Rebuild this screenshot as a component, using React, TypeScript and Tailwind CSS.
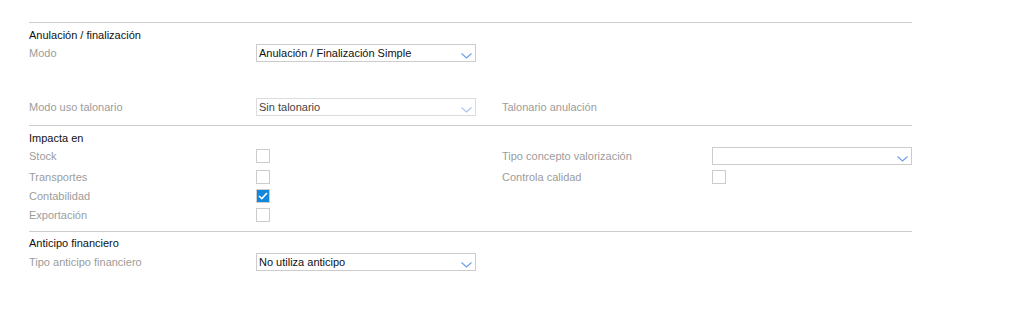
import React from "react";

const Chevron = ({ light = false }: { light?: boolean }) => (
  <svg width="11" height="6" viewBox="0 0 11 6" className="absolute right-[3px] top-[8px]" fill="none">
    <path d="M0.5 0.5 L5.5 5 L10.5 0.5" stroke={light ? "#a9c4f2" : "#6b9cf0"} strokeWidth="1.1" />
  </svg>
);

function Select({ value, width = "w-[220px]", dim = false }: { value: string; width?: string; dim?: boolean }) {
  return (
    <div className={`relative h-[18px] ${width} border ${dim ? "border-[#dcdcdc]" : "border-[#cccccc]"} bg-white flex items-center pl-[2px]`}>
      <span className={`text-[11px] leading-[16px] ${dim ? "text-[#444]" : "text-[#111]"}`}>{value}</span>
      <Chevron light={dim} />
    </div>
  );
}

function Check({ checked = false }: { checked?: boolean }) {
  return checked ? (
    <div className="w-[14px] h-[14px] bg-[#1287dc] border border-[#cfcfcf] flex items-center justify-center">
      <svg width="10" height="8" viewBox="0 0 10 8" fill="none">
        <path d="M1 4 L3.8 6.6 L9 1" stroke="white" strokeWidth="1.6" />
      </svg>
    </div>
  ) : (
    <div className="w-[14px] h-[14px] border border-[#cccccc] bg-white" />
  );
}

const Label = ({ children, w = "w-[227px]" }: { children: React.ReactNode; w?: string }) => (
  <div className={`${w} shrink-0 text-[11px] text-[#9c9c9c]`}>{children}</div>
);

const Heading = ({ children }: { children: React.ReactNode }) => (
  <div className="h-[13px] leading-[13px] text-[11px] text-[#111]">{children}</div>
);

const Line = () => <div className="h-px bg-[#cccccc]" />;

export default function App() {
  return (
    <div className="w-[1013px] h-[309px] bg-white" style={{ fontFamily: '"Liberation Sans", Arial, sans-serif' }}>
      <div className="pl-[29px] pt-[22px] w-[912px]">
        <Line />
        <div className="mt-[6px]">
          <Heading>Anulación / finalización</Heading>
        </div>
        <div className="mt-[2px] flex items-center h-[18px]">
          <Label>Modo</Label>
          <Select value="Anulación / Finalización Simple" />
        </div>
        <div className="mt-[36px] flex items-center h-[18px]">
          <Label>Modo uso talonario</Label>
          <Select value="Sin talonario" dim />
          <div className="ml-[26px]">
            <Label w="w-[210px]">Talonario anulación</Label>
          </div>
        </div>
        <div className="mt-[9px]">
          <Line />
        </div>
        <div className="mt-[6px]">
          <Heading>Impacta en</Heading>
        </div>
        <div className="mt-[2px] flex items-center h-[18px]">
          <Label>Stock</Label>
          <div className="w-[220px]">
            <Check />
          </div>
          <div className="ml-[26px] flex items-center">
            <Label w="w-[210px]">Tipo concepto valorización</Label>
            <Select value="" width="w-[200px]" />
          </div>
        </div>
        <div className="mt-[3px] flex items-center h-[18px]">
          <Label>Transportes</Label>
          <div className="w-[220px]">
            <Check />
          </div>
          <div className="ml-[26px] flex items-center">
            <Label w="w-[210px]">Controla calidad</Label>
            <Check />
          </div>
        </div>
        <div className="mt-[1px] flex items-center h-[18px]">
          <Label>Contabilidad</Label>
          <Check checked />
        </div>
        <div className="mt-[1px] flex items-center h-[18px]">
          <Label>Exportación</Label>
          <Check />
        </div>
        <div className="mt-[7px]">
          <Line />
        </div>
        <div className="mt-[5px]">
          <Heading>Anticipo financiero</Heading>
        </div>
        <div className="mt-[3px] flex items-center h-[18px]">
          <Label>Tipo anticipo financiero</Label>
          <Select value="No utiliza anticipo" />
        </div>
      </div>
    </div>
  );
}
